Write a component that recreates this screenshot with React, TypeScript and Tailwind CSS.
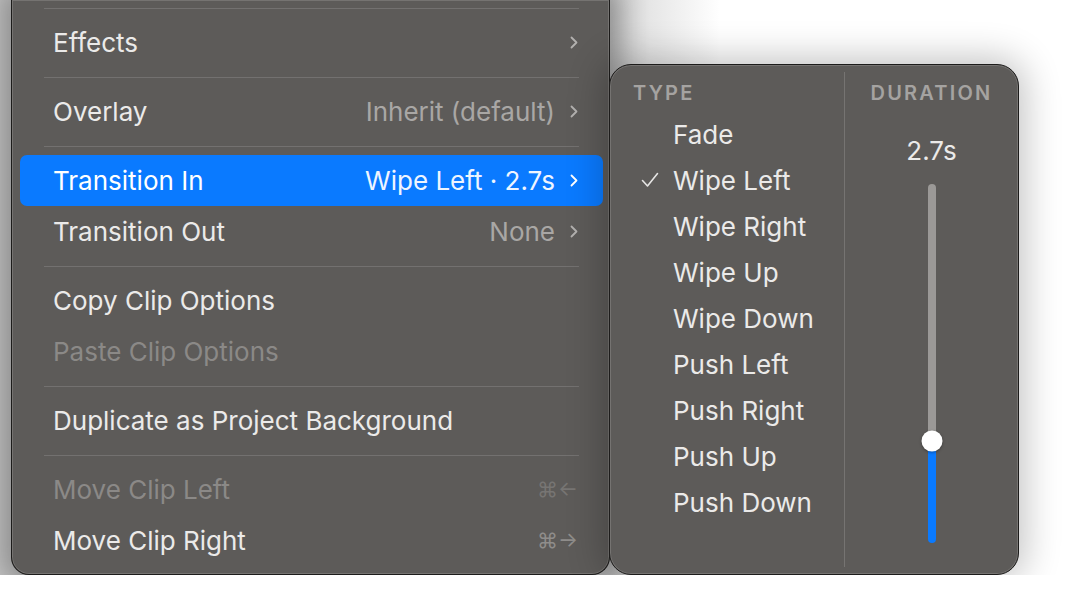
import React from "react";

type MenuEntry =
  | { kind: "sep" }
  | {
      kind: "item";
      label: string;
      value?: string;
      shortcut?: string;
      chevron?: boolean;
      active?: boolean;
      disabled?: boolean;
    };

const menu: MenuEntry[] = [
  { kind: "sep" },
  { kind: "item", label: "Effects", chevron: true },
  { kind: "sep" },
  { kind: "item", label: "Overlay", value: "Inherit (default)", chevron: true },
  { kind: "sep" },
  { kind: "item", label: "Transition In", value: "Wipe Left · 2.7s", chevron: true, active: true },
  { kind: "item", label: "Transition Out", value: "None", chevron: true },
  { kind: "sep" },
  { kind: "item", label: "Copy Clip Options" },
  { kind: "item", label: "Paste Clip Options", disabled: true },
  { kind: "sep" },
  { kind: "item", label: "Duplicate as Project Background" },
  { kind: "sep" },
  { kind: "item", label: "Move Clip Left", shortcut: "⌘←", disabled: true },
  { kind: "item", label: "Move Clip Right", shortcut: "⌘→" },
];

const transitionTypes = [
  "Fade",
  "Wipe Left",
  "Wipe Right",
  "Wipe Up",
  "Wipe Down",
  "Push Left",
  "Push Right",
  "Push Up",
  "Push Down",
];

const Chevron = ({ className }: { className?: string }) => (
  <svg width="8" height="13" viewBox="0 0 8 13" fill="none" className={className}>
    <path d="M1.5 1.5 L6.5 6.5 L1.5 11.5" stroke="currentColor" strokeWidth="1.8" strokeLinecap="round" strokeLinejoin="round" />
  </svg>
);

const Check = () => (
  <svg width="18" height="16" viewBox="0 0 18 16" fill="none" className="text-[#e6e5e4]">
    <path d="M1.5 8.5 L6.5 14 L16.5 1.5" stroke="currentColor" strokeWidth="1.6" strokeLinecap="round" strokeLinejoin="round" />
  </svg>
);

const MainMenu = () => (
  <div className="w-[599px] h-[575px] shrink-0 bg-[#5d5b59] border-x border-b border-[#1d1c1b] rounded-b-[18px] [box-shadow:inset_0_0_0_1px_rgba(255,255,255,0.15),0_0_24px_10px_rgba(0,0,0,0.26)] pl-[8px] pr-[6px]">
    <div className="-mt-[1px]">
      {menu.map((entry, i) => {
        if (entry.kind === "sep") {
          return (
            <div key={i} className="h-[18px] flex items-center px-[24px]">
              <div className="h-px w-full bg-[#737170]" />
            </div>
          );
        }
        const textColor = entry.active
          ? "text-white"
          : entry.disabled
            ? "text-[#8b8987]"
            : "text-[#ebeae9]";
        const valueColor = entry.active ? "text-[#eef5ff]" : "text-[#a9a7a5]";
        return (
          <div
            key={i}
            className={`h-[51px] flex items-center pl-[33px] pr-[25px] rounded-[7px] ${entry.active ? "bg-[#0a7aff]" : ""}`}
          >
            <span className={`text-[26px] ${textColor}`}>{entry.label}</span>
            <div className="flex-1" />
            {entry.value && <span className={`text-[26px] mr-[15px] ${valueColor}`}>{entry.value}</span>}
            {entry.chevron && <Chevron className={entry.active ? "text-white" : "text-[#b3b1af]"} />}
            {entry.shortcut && (
              <span className={`text-[21px] ${entry.disabled ? "text-[#777573]" : "text-[#8f8d8b]"}`}>
                {entry.shortcut}
              </span>
            )}
          </div>
        );
      })}
    </div>
  </div>
);

const TransitionPanel = () => (
  <div className="relative z-10 mt-[64px] -ml-[1px] w-[410px] h-[511px] shrink-0 flex bg-[#5d5b59] border border-[#1d1c1b] rounded-[22px] [box-shadow:inset_0_0_0_1px_rgba(255,255,255,0.15),0_0_36px_6px_rgba(0,0,0,0.24)]">
    {/* Type list */}
    <div className="w-[234px] pt-[10px]">
      <div className="h-[36px] flex items-center pl-[23px] text-[20px] font-semibold tracking-[0.11em] text-[#a5a3a1]">
        TYPE
      </div>
      {transitionTypes.map((t) => (
        <div key={t} className="h-[46px] flex items-center">
          <div className="w-[63px] pl-[31px] flex items-center">{t === "Wipe Left" && <Check />}</div>
          <span className="text-[26px] text-[#ebeae9]">{t}</span>
        </div>
      ))}
    </div>

    <div className="w-px my-[7px] bg-[#767472]" />

    {/* Duration slider */}
    <div className="flex-1 pt-[10px] flex flex-col items-center">
      <div className="h-[36px] flex items-center text-[20px] font-semibold tracking-[0.11em] text-[#a5a3a1]">
        DURATION
      </div>
      <div className="mt-[25px] h-[28px] flex items-center text-[26px] text-[#ebeae9]">2.7s</div>
      <div className="relative mt-[20px] w-[8px] h-[359px] flex flex-col">
        <div className="h-[257px] bg-[#9b9997] rounded-t-full" />
        <div className="flex-1 bg-[#0a7aff] rounded-b-full" />
        <div className="absolute left-1/2 top-[257px] -translate-x-1/2 -translate-y-1/2 w-[21px] h-[21px] rounded-full bg-white [box-shadow:0_1px_3px_rgba(0,0,0,0.35)]" />
      </div>
    </div>
  </div>
);

export default function App() {
  return (
    <div className="w-[1086px] h-[600px] bg-white overflow-hidden font-['Inter','Noto_Sans',sans-serif] antialiased">
      <div className="h-[575px] overflow-hidden flex items-start pl-[11px] bg-[linear-gradient(to_right,#c3c3c3_0px,#c6c6c6_612px,#e6e6e6_650px,#ffffff_720px)]">
        <MainMenu />
        <TransitionPanel />
      </div>
    </div>
  );
}
